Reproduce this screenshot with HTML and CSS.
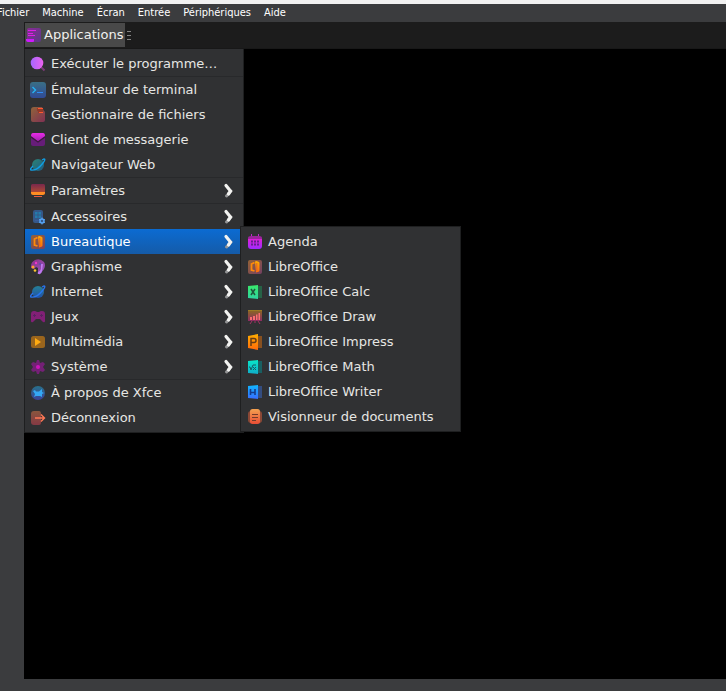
FILE: index.html
```html
<!DOCTYPE html>
<html lang="fr">
<head>
<meta charset="utf-8">
<title>Xfce</title>
<link rel="stylesheet" href="styles.css">
</head>
<body>
<svg class="defs" aria-hidden="true">
  <defs>
    <linearGradient id="magenta" x1="0" y1="0" x2="0" y2="1"><stop offset="0" stop-color="#e82be8"/><stop offset="1" stop-color="#a01fae"/></linearGradient>
    <linearGradient id="violet" x1="0" y1="0" x2="1" y2="1"><stop offset="0" stop-color="#8a2a96"/><stop offset="1" stop-color="#5b3a86"/></linearGradient>
    <linearGradient id="lilac" x1="0" y1="0" x2="1" y2="0"><stop offset="0" stop-color="#a566ff"/><stop offset="1" stop-color="#ec62ee"/></linearGradient>
    <linearGradient id="term" x1="0" y1="0" x2="0" y2="1"><stop offset="0" stop-color="#3a6f85"/><stop offset="1" stop-color="#304a96"/></linearGradient>
    <linearGradient id="file" x1="0" y1="0" x2="1" y2="1"><stop offset="0" stop-color="#91643a"/><stop offset="1" stop-color="#803053"/></linearGradient>
    <linearGradient id="sunset" x1="0" y1="0" x2="0" y2="1"><stop offset="0" stop-color="#79284c"/><stop offset="1" stop-color="#b8502e"/></linearGradient>
    <linearGradient id="teal" x1="0" y1="0" x2="1" y2="1"><stop offset="0" stop-color="#2b8475"/><stop offset="1" stop-color="#205b82"/></linearGradient>
    <linearGradient id="blue" x1="0" y1="0" x2="0" y2="1"><stop offset="0" stop-color="#258096"/><stop offset="1" stop-color="#2252a8"/></linearGradient>
    <linearGradient id="office" x1="0" y1="0" x2="1" y2="1"><stop offset="0" stop-color="#946236"/><stop offset="1" stop-color="#744062"/></linearGradient>
    <linearGradient id="orange" x1="0" y1="0" x2="0" y2="1"><stop offset="0" stop-color="#ffae00"/><stop offset="1" stop-color="#ff6a0a"/></linearGradient>
    <linearGradient id="palette" x1="0" y1="0" x2="1" y2="1"><stop offset="0" stop-color="#8b3182"/><stop offset="1" stop-color="#9a55c4"/></linearGradient>
    <linearGradient id="board" x1="0" y1="0" x2="0" y2="1"><stop offset="0" stop-color="#8b6425"/><stop offset="1" stop-color="#8b2c63"/></linearGradient>
    <linearGradient id="calc" x1="0" y1="0" x2="0" y2="1"><stop offset="0" stop-color="#39e96a"/><stop offset="1" stop-color="#2fd3a1"/></linearGradient>
    <linearGradient id="math" x1="0" y1="0" x2="0" y2="1"><stop offset="0" stop-color="#08e7c8"/><stop offset="1" stop-color="#10acc8"/></linearGradient>
    <linearGradient id="writer" x1="0" y1="0" x2="0" y2="1"><stop offset="0" stop-color="#10b7ff"/><stop offset="1" stop-color="#386cff"/></linearGradient>
    <linearGradient id="agenda" x1="0" y1="0" x2="0" y2="1"><stop offset="0" stop-color="#df20d7"/><stop offset="1" stop-color="#9d2bff"/></linearGradient>
    <linearGradient id="exit" x1="0" y1="0" x2="0" y2="1"><stop offset="0" stop-color="#8a563e"/><stop offset="1" stop-color="#843944"/></linearGradient>
    <linearGradient id="doc" x1="0" y1="0" x2="0" y2="1"><stop offset="0" stop-color="#f3a150"/><stop offset="1" stop-color="#e94d35"/></linearGradient>
    <linearGradient id="globe" x1="0" y1="0" x2="0" y2="1"><stop offset="0" stop-color="#28718b"/><stop offset="1" stop-color="#3b4298"/></linearGradient>

    <symbol id="i-apps" viewBox="0 0 16 16"><rect x="2" y="1" width="14" height="14" rx="2" fill="url(#violet)"/><path d="M3 3.500h8M3 6.500h5M3 8.500h7" stroke="#dd20e8"/><path d="M1 12h8v2q0 1-1 1H3q-2 0-2-2z" fill="#d018ff"/></symbol>
    <symbol id="i-run" viewBox="0 0 16 16"><path d="M11.500 11.500l3 3" stroke="#7b3b78" stroke-width="2"/><circle cx="7" cy="7" r="6.300" fill="url(#lilac)"/></symbol>
    <symbol id="i-term" viewBox="0 0 16 16"><rect width="16" height="16" rx="3" fill="url(#term)"/><path d="M2.500 5l3 3-3 3" fill="none" stroke="#25b4f4" stroke-width="1.400"/><path d="M7 10.500h6" stroke="#318cf5"/></symbol>
    <symbol id="i-files" viewBox="0 0 16 16"><path d="M4 0h8l2 4q1 0 1 2v7q0 2-2 2H3q-2 0-2-2V3q0-3 3-3z" fill="url(#file)"/><path d="M7 1h6v5H8V4H7z" fill="#933a29"/><path d="M8 1.500h5M9 5.500h4" stroke="#ff5730"/></symbol>
    <symbol id="i-mail" viewBox="0 0 16 16"><rect x="1" y="2" width="14" height="12" rx="2" fill="#671d79"/><path d="M3 1h10q2 0 2 3L8 9.500 1 4q0-3 2-3z" fill="url(#magenta)"/><path d="M1 5l7 5 7-5" fill="none" stroke="#3d183f" stroke-width="1.200"/></symbol>
    <symbol id="i-web" viewBox="0 0 16 16"><circle cx="8" cy="8" r="6" fill="url(#teal)"/><path d="M3 9Q-1 13 1 13q6 1 12-7 3-4 1-4l-2 1" fill="none" stroke="#109fe5" stroke-width="1.300"/></symbol>
    <symbol id="i-settings" viewBox="0 0 16 16"><rect x="1" y="1" width="14" height="10" rx="1.500" fill="url(#sunset)"/><path d="M1 9h14v1q0 2-2 2H3q-2 0-2-2z" fill="#ff8d23"/><path d="M4 13.500h8" stroke="#e85c41"/></symbol>
    <symbol id="i-accessories" viewBox="0 0 16 16"><rect x="3" y="1" width="10" height="13" rx="2" fill="#355889"/><path d="M5 3h6v6H5z" fill="#247bad"/><path d="M5 6h6M8 3v6" stroke="#3a527d" stroke-width=".7"/><path d="M5 11.500h4" stroke="#395c9b"/><circle cx="12" cy="12" r="2" fill="#355889" stroke="#56a4f5" stroke-width="1.500"/><path d="M12 8.500v1.500M12 14v1.500M9 10.300l1 .7M14 13l1 .7M15 10.300l-1 .7M10 13l-1 .7" stroke="#56a4f5"/></symbol>
    <symbol id="i-office" viewBox="0 0 16 16"><rect x="1" y="1" width="14" height="14" rx="2" fill="url(#office)"/><path d="M7.500 3.500L4.500 5v6l3 1" fill="none" stroke="#ff8a0a" stroke-width="1.800"/><path d="M8 2.500L9.500 2l2 .7q1 .3 1 1.300v7.500q0 1-1 1.300l-2.500.7z" fill="url(#orange)"/><path d="M9.800 4v8" stroke="#e0622a"/></symbol>
    <symbol id="i-graphics" viewBox="0 0 16 16"><path d="M1 7Q1 3 5 1q5-2 9 2 2 3 0 7l-3 4-3-1V9L6 8l-2 2-3-1z" fill="url(#palette)"/><path d="M11 5h2l-1 7q-1 4-3 3-2 0-1-2 2 0 3-3z" fill="#be7aef"/><circle cx="6" cy="4" r="1.200" fill="#ee37c8"/><circle cx="3" cy="8" r="1.500" fill="#ffa529"/><circle cx="5" cy="11.500" r="1.300" fill="#ffc72e"/><circle cx="10" cy="5" r="1.200" fill="#6847ad"/></symbol>
    <symbol id="i-internet" viewBox="0 0 16 16"><circle cx="8" cy="8" r="6" fill="url(#blue)"/><path d="M3 9Q-1 13 1 13q6 1 12-7 3-4 1-4l-2 1" fill="none" stroke="#2875ef" stroke-width="1.300"/></symbol>
    <symbol id="i-games" viewBox="0 0 16 16"><path d="M1 5q0-3 3-3 2 0 3 1h2q1-1 3-1 3 0 3 3v7q0 2-2 1l-3-3H6l-3 3q-2 1-2-1z" fill="#822076"/><path d="M3 6.500h3M4.500 5v3M10 6.500h3M11.500 5v3" stroke="#5a2260"/></symbol>
    <symbol id="i-media" viewBox="0 0 16 16"><rect x="1" y="2" width="14" height="12" rx="2.500" fill="#9a651d"/><path d="M5 4l6 4-6 4z" fill="#ffab11"/></symbol>
    <symbol id="i-system" viewBox="0 0 16 16"><path d="M7 1h2l1 3 3-1 2 2-2 3 2 3-2 2-3-1-1 3H7l-1-3-3 1-2-2 2-3-2-3 2-2 3 1z" fill="#742076"/><circle cx="8" cy="8" r="2" fill="#ce12bd"/></symbol>
    <symbol id="i-about" viewBox="0 0 16 16"><circle cx="8" cy="8" r="7" fill="url(#globe)"/><path d="M3 6l2-1 1 1.500h3L12 4v3l2 1-2 1v3l-2-1H6l-2 1 1-3z" fill="#35a8f4"/></symbol>
    <symbol id="i-exit" viewBox="0 0 16 16"><path d="M4 1h5q2 0 2 3v9q0 2-2 2H4q-3 0-3-3V4q0-3 3-3z" fill="url(#exit)"/><path d="M5 8h9M11 4.500L14.500 8 11 11.500" fill="none" stroke="#ff7855" stroke-width="1.400"/></symbol>
    <symbol id="i-agenda" viewBox="0 0 16 16"><path d="M4.500 0v3M11.500 0v3" stroke="#bf28cc"/><path d="M1 4q0-2 3-2h8q3 0 3 2v2H1z" fill="#9a269b"/><path d="M1 5h14v7q0 3-3 3H4q-3 0-3-3z" fill="url(#agenda)"/><path d="M4 7.500h8M4 10.500h8" stroke="#632190" stroke-width="2" stroke-dasharray="2 1"/></symbol>
    <symbol id="i-calc" viewBox="0 0 16 16"><path d="M9 2h6v12H9z" fill="#276247"/><path d="M1 2l10-1v14L1 14z" fill="url(#calc)"/><path d="M4 5l4 6M8 5l-4 6" stroke="#20533c" stroke-width="1.500"/></symbol>
    <symbol id="i-draw" viewBox="0 0 16 16"><path d="M1 2h14v10H1z" fill="url(#board)"/><path d="M1 1.500h14" stroke="#9a7925"/><path d="M3 8h2v3H3zM6 7h2v4H6zM9 5.500h1.500V11H9zM11.500 4H13v7h-1.500z" fill="#fb6f70"/><path d="M5 12l-2 3M11 12l2 3M8 12v2" stroke="#a53164"/></symbol>
    <symbol id="i-impress" viewBox="0 0 16 16"><path d="M9 2h6v12H9z" fill="#875020"/><path d="M1 2l10-2v16L1 14z" fill="url(#orange)"/><path d="M4 12V4.500h3q2 0 2 2t-2 2H4" fill="none" stroke="#653b15" stroke-width="1.500"/></symbol>
    <symbol id="i-math" viewBox="0 0 16 16"><path d="M9 2h6v12H9z" fill="#195f62"/><path d="M1 2l10-1v14L1 14z" fill="url(#math)"/><path d="M2 8h1l1 3 2-5h3M6 8l3 3M9 8l-3 3" fill="none" stroke="#135e66"/></symbol>
    <symbol id="i-writer" viewBox="0 0 16 16"><path d="M9 2h6v12H9z" fill="#344d80"/><path d="M1 2l10-1v14L1 14z" fill="url(#writer)"/><path d="M3.500 5v6M8 5v6M3.500 8.500H8" fill="none" stroke="#143c8d" stroke-width="1.600"/></symbol>
    <symbol id="i-viewer" viewBox="0 0 16 16"><path d="M4 2h8q3 0 3 3v6q0 3-3 3H4q-3 0-3-3V5q0-3 3-3z" fill="#8b4836"/><rect x="3" y="0" width="10" height="15" rx="2.500" fill="url(#doc)"/><path d="M5 5.500h6M5 8.500h6M5 11.500h4" stroke="#743a2a" stroke-width="1.200"/></symbol>
    <symbol id="chevron" viewBox="0 0 12 16"><path d="M8 8l-4.500 5" fill="none" stroke="#949596" stroke-width="3" stroke-linecap="round"/><path d="M3 2.500L7.500 8 5.500 11" fill="none" stroke="#f3f3f1" stroke-width="3.200" stroke-linecap="round"/></symbol>
  </defs>
</svg>

<header class="host">
  <nav class="host-menu" aria-label="Machine virtuelle">
    <button type="button">Fichier</button>
    <button type="button">Machine</button>
    <button type="button">Écran</button>
    <button type="button">Entrée</button>
    <button type="button">Périphériques</button>
    <button type="button">Aide</button>
  </nav>
</header>

<main class="screen">
  <div class="panel">
    <button type="button" class="launcher"><svg class="icon"><use href="#i-apps"/></svg>Applications</button>
    <span class="grip"></span>
  </div>
  <div class="desktop">
    <ul class="menu">
      <li><button type="button" class="item"><svg class="icon"><use href="#i-run"/></svg>Exécuter le programme…</button></li>
      <li class="split"><button type="button" class="item"><svg class="icon"><use href="#i-term"/></svg>Émulateur de terminal</button></li>
      <li><button type="button" class="item"><svg class="icon"><use href="#i-files"/></svg>Gestionnaire de fichiers</button></li>
      <li><button type="button" class="item"><svg class="icon"><use href="#i-mail"/></svg>Client de messagerie</button></li>
      <li><button type="button" class="item"><svg class="icon"><use href="#i-web"/></svg>Navigateur Web</button></li>
      <li class="split"><button type="button" class="item"><svg class="icon"><use href="#i-settings"/></svg>Paramètres<svg class="chevron"><use href="#chevron"/></svg></button></li>
      <li class="split"><button type="button" class="item"><svg class="icon"><use href="#i-accessories"/></svg>Accessoires<svg class="chevron"><use href="#chevron"/></svg></button></li>
      <li class="open"><button type="button" class="item active" aria-expanded="true"><svg class="icon"><use href="#i-office"/></svg>Bureautique<svg class="chevron"><use href="#chevron"/></svg></button>
        <ul class="menu submenu">
          <li><button type="button" class="item"><svg class="icon"><use href="#i-agenda"/></svg>Agenda</button></li>
          <li><button type="button" class="item"><svg class="icon"><use href="#i-office"/></svg>LibreOffice</button></li>
          <li><button type="button" class="item"><svg class="icon"><use href="#i-calc"/></svg>LibreOffice Calc</button></li>
          <li><button type="button" class="item"><svg class="icon"><use href="#i-draw"/></svg>LibreOffice Draw</button></li>
          <li><button type="button" class="item"><svg class="icon"><use href="#i-impress"/></svg>LibreOffice Impress</button></li>
          <li><button type="button" class="item"><svg class="icon"><use href="#i-math"/></svg>LibreOffice Math</button></li>
          <li><button type="button" class="item"><svg class="icon"><use href="#i-writer"/></svg>LibreOffice Writer</button></li>
          <li><button type="button" class="item"><svg class="icon"><use href="#i-viewer"/></svg>Visionneur de documents</button></li>
        </ul>
      </li>
      <li><button type="button" class="item"><svg class="icon"><use href="#i-graphics"/></svg>Graphisme<svg class="chevron"><use href="#chevron"/></svg></button></li>
      <li><button type="button" class="item"><svg class="icon"><use href="#i-internet"/></svg>Internet<svg class="chevron"><use href="#chevron"/></svg></button></li>
      <li><button type="button" class="item"><svg class="icon"><use href="#i-games"/></svg>Jeux<svg class="chevron"><use href="#chevron"/></svg></button></li>
      <li><button type="button" class="item"><svg class="icon"><use href="#i-media"/></svg>Multimédia<svg class="chevron"><use href="#chevron"/></svg></button></li>
      <li><button type="button" class="item"><svg class="icon"><use href="#i-system"/></svg>Système<svg class="chevron"><use href="#chevron"/></svg></button></li>
      <li class="split"><button type="button" class="item"><svg class="icon"><use href="#i-about"/></svg>À propos de Xfce</button></li>
      <li><button type="button" class="item"><svg class="icon"><use href="#i-exit"/></svg>Déconnexion</button></li>
    </ul>
  </div>
</main>
</body>
</html>
```
FILE: styles.css
```css
* {
  box-sizing: border-box;
}

body {
  display: flex;
  flex-direction: column;
  min-height: 100vh;
  margin: 0;
  background: #3b3c3e;
  color: #e6e6e3;
  font-family: "DejaVu Sans", sans-serif;
  font-size: 13px;
  line-height: 16px;
}

button {
  border: 0;
  padding: 0;
  background: none;
  color: inherit;
  font: inherit;
  text-align: left;
  white-space: nowrap;
}

.defs {
  position: absolute;
  width: 0;
  height: 0;
}

.host {
  border-top: 4px solid #f1f1f1;
  background: #3b3c3e;
  overflow: hidden;
}

.host-menu {
  display: flex;
  gap: 13px;
  height: 18px;
  margin-left: -3px;
  color: #fff;
  font-family: "DejaVu Sans Condensed", "DejaVu Sans", sans-serif;
  font-size: 11px;
}

.screen {
  display: flex;
  flex: 1;
  flex-direction: column;
  margin: 0 0 12px 24px;
  background: #000;
}

.panel {
  display: flex;
  align-items: center;
  gap: 2px;
  height: 27px;
  padding: 1px;
  border-bottom: 1px solid #181818;
  background: #1c1c1c;
}

.launcher {
  display: flex;
  align-items: center;
  gap: 3px;
  height: 24px;
  padding: 0 2px 0 0;
  background: #494949;
  color: #f0f0ee;
}

.grip {
  width: 4px;
  height: 9px;
  background: repeating-linear-gradient(#858585 0 1px, transparent 1px 4px);
}

.icon {
  flex: none;
  width: 16px;
  height: 16px;
}

.desktop {
  display: flex;
  flex: 1;
  align-items: flex-start;
}

.menu {
  width: 220px;
  margin: 0;
  padding: 2px 0;
  border: 1px solid #1e1f20;
  border-top: 0;
  background: #303133;
  list-style: none;
}

.item {
  display: flex;
  align-items: center;
  gap: 5px;
  width: 100%;
  height: 25px;
  padding: 0 8px 0 5px;
}

.split {
  border-top: 1px solid #28292b;
}

.chevron {
  width: 12px;
  height: 16px;
  margin-left: auto;
}

.active {
  background: linear-gradient(#0b6bd2, #155ba8);
  color: #fff;
}

.open {
  position: relative;
}

.submenu {
  position: absolute;
  top: -3px;
  left: 215px;
  width: 221px;
  border-top: 1px solid #1e1f20;
  color: #e6e6e3;
}

.submenu .item {
  padding-left: 6px;
}
```
